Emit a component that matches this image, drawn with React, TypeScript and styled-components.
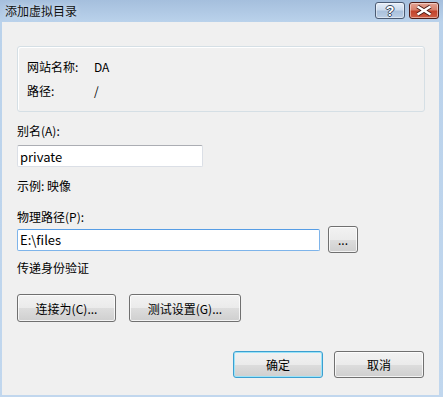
import styled, { createGlobalStyle } from 'styled-components';

const GlobalStyle = createGlobalStyle`
    html, body {
        margin: 0;
        padding: 0;
        background: #bcd3ec;
    }
    * {
        box-sizing: border-box;
    }
`;

const Window = styled.div`
    width: 443px;
    height: 397px;
    display: flex;
    flex-direction: column;
    background: linear-gradient(#a5bfdd 0px, #bad2eb 22px, #c1d7ee 100%);
    padding: 0 4px 2px 2px;
    font-family: "Noto Sans CJK SC", "Noto Sans", sans-serif;
    font-size: 12px;
    color: #000;
`;

const TitleBar = styled.div`
    height: 22px;
    display: flex;
    align-items: flex-start;
    justify-content: space-between;
`;

const Title = styled.span`
    padding: 3px 0 0 3px;
    line-height: 16px;
    font-size: 12px;
    color: #111;
    text-shadow: 0 0 6px rgba(255, 255, 255, 0.7);
`;

const Controls = styled.div`
    display: flex;
    gap: 4px;
    padding-top: 2px;
`;

// Caption buttons (help / close)
const CaptionButton = styled.div<{ $variant: 'help' | 'close' }>`
    width: 30px;
    height: 17px;
    border-radius: 3px;
    display: flex;
    align-items: center;
    justify-content: center;
    border: 1px solid ${p => (p.$variant === 'close' ? '#4f1c16' : '#4b5b73')};
    background: ${p =>
        p.$variant === 'close'
            ? 'linear-gradient(#e3a394 0%, #d7806b 45%, #c2432c 55%, #cf5e45 100%)'
            : 'linear-gradient(#e6eef8 0%, #ccdbed 45%, #aac1dc 55%, #bccfe6 100%)'};
    box-shadow: inset 0 0 0 1px rgba(255, 255, 255, 0.45);
`;

const HelpGlyph = styled.span`
    font-family: "Liberation Sans", sans-serif;
    font-weight: bold;
    font-size: 14px;
    line-height: 14px;
    color: #fff;
    text-shadow: 1px 0 0 #3b4a5e, -1px 0 0 #3b4a5e, 0 1px 0 #3b4a5e, 0 -1px 0 #3b4a5e;
`;

const Client = styled.div`
    flex: 1;
    background: #f0f0f0;
    padding: 24px 14px 0 15px;
    display: flex;
    flex-direction: column;
`;

const GroupBox = styled.div`
    height: 66px;
    border: 1px solid #d5dfe5;
    border-radius: 3px;
    box-shadow: inset 1px 1px 0 #fff;
    padding: 7px 0 0 9px;
`;

const InfoRow = styled.div`
    display: flex;
    height: 24px;
    align-items: center;
`;

const InfoKey = styled.span`
    width: 67px;
`;

const Label = styled.div<{ $mt: number }>`
    margin-top: ${p => p.$mt}px;
    line-height: 16px;
    height: 16px;
`;

const TextInput = styled.div<{ $width: number; $focused?: boolean }>`
    width: ${p => p.$width}px;
    height: 22px;
    background: #fff;
    border: 1px solid ${p => (p.$focused ? '#7eb4ea' : '#dbdfe6')};
    border-top-color: ${p => (p.$focused ? '#569de5' : '#abadb3')};
    border-radius: 2px;
    padding-left: 2px;
    display: flex;
    align-items: center;
    font-size: 13px;
`;

const Field = styled.div<{ $mt: number }>`
    margin-top: ${p => p.$mt}px;
`;

const PathRow = styled.div`
    margin-top: 1px;
    height: 27px;
    display: flex;
    align-items: center;
    gap: 8px;
`;

const Button = styled.button<{ $width: number; $height?: number; $default?: boolean }>`
    width: ${p => p.$width}px;
    height: ${p => p.$height ?? 28}px;
    padding: 0;
    border: 1px solid ${p => (p.$default ? '#3c9fd0' : '#707070')};
    border-radius: 3px;
    background: linear-gradient(#f2f2f2 0%, #ebebeb 50%, #dddddd 51%, #cfcfcf 100%);
    box-shadow: inset 0 0 0 1px ${p => (p.$default ? '#9be3f8' : 'rgba(255,255,255,0.75)')};
    font-family: inherit;
    font-size: 12px;
    color: #000;
    display: flex;
    align-items: center;
    justify-content: center;
`;

const ButtonRow = styled.div<{ $mt: number; $right?: boolean }>`
    margin-top: ${p => p.$mt}px;
    display: flex;
    gap: ${p => (p.$right ? 11 : 13)}px;
    justify-content: ${p => (p.$right ? 'flex-end' : 'flex-start')};
    padding-right: ${p => (p.$right ? 1 : 0)}px;
`;

const App = () => {
    return (
        <>
            <GlobalStyle />
            <Window>
                <TitleBar>
                    <Title>添加虚拟目录</Title>
                    <Controls>
                        <CaptionButton $variant='help'>
                            <HelpGlyph>?</HelpGlyph>
                        </CaptionButton>
                        <CaptionButton $variant='close'>
                            <svg width='18' height='11' viewBox='0 0 18 11'>
                                <path
                                    d='M2.5 1.5 L9 5.5 L15.5 1.5 M2.5 9.5 L9 5.5 L15.5 9.5'
                                    stroke='#4a1a14'
                                    strokeWidth='4.2'
                                    fill='none'
                                />
                                <path
                                    d='M2.5 1.5 L9 5.5 L15.5 1.5 M2.5 9.5 L9 5.5 L15.5 9.5'
                                    stroke='#fff'
                                    strokeWidth='2.4'
                                    fill='none'
                                />
                            </svg>
                        </CaptionButton>
                    </Controls>
                </TitleBar>
                <Client>
                    <GroupBox>
                        <InfoRow>
                            <InfoKey>网站名称:</InfoKey>
                            <span>DA</span>
                        </InfoRow>
                        <InfoRow>
                            <InfoKey>路径:</InfoKey>
                            <span>/</span>
                        </InfoRow>
                    </GroupBox>
                    <Label $mt={11}>别名(A):</Label>
                    <Field $mt={6}>
                        <TextInput $width={186}>private</TextInput>
                    </Field>
                    <Label $mt={11}>示例: 映像</Label>
                    <Label $mt={15}>物理路径(P):</Label>
                    <PathRow>
                        <TextInput $width={303} $focused>E:\files</TextInput>
                        <Button $width={30} $height={27}>...</Button>
                    </PathRow>
                    <Label $mt={7}>传递身份验证</Label>
                    <ButtonRow $mt={18}>
                        <Button $width={99}>连接为(C)...</Button>
                        <Button $width={112}>测试设置(G)...</Button>
                    </ButtonRow>
                    <ButtonRow $mt={29} $right>
                        <Button $width={90} $height={27} $default>确定</Button>
                        <Button $width={90} $height={27}>取消</Button>
                    </ButtonRow>
                </Client>
            </Window>
        </>
    );
};

export default App;
